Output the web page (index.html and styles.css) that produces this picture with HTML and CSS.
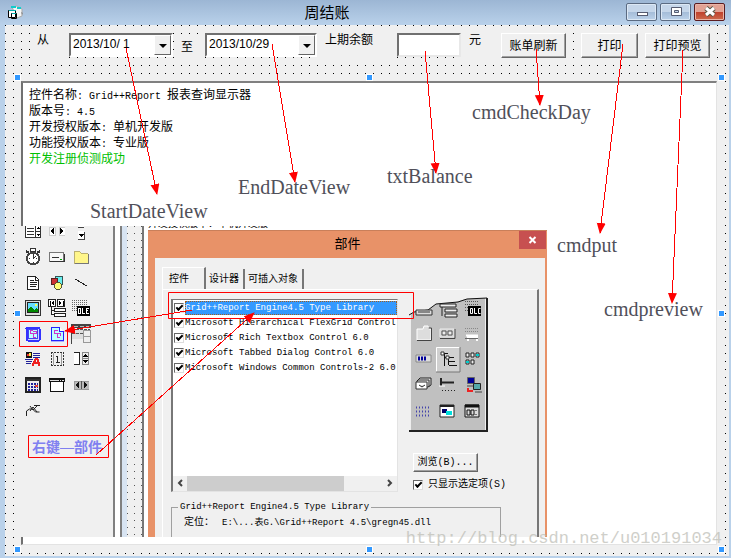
FILE: index.html
```html
<!DOCTYPE html>
<html lang="zh-CN">
<head>
<meta charset="utf-8">
<title>周结账</title>
<link rel="stylesheet" href="styles.css">
</head>
<body>
<div class="window">
  <header class="titlebar">
    <svg class="app-icon" width="16" height="16" viewBox="0 0 16 16" aria-hidden="true">
      <path d="M4 2l5-1 5 3v7l-5 2z" fill="#f4f4f4" stroke="#aaa"/><path d="M3 2h5M9 3h4" stroke="#1cc" stroke-width="2"/><path d="M13 7l2 1-1 2" fill="#888"/>
      <path d="M.5 5.500h7v7h-7zM3.500 8.500h5v5h-5z" fill="#fff" stroke="#000"/><path d="M1 5.500h7M4 8.500h4" stroke="#0aa" stroke-width="1"/>
    </svg>
    <h1>周结账</h1>
    <div class="window-buttons">
      <button type="button" aria-label="最小化"><svg width="14" height="12" viewBox="0 0 14 12"><rect x="2.500" y="6.500" width="10" height="3" fill="#fff" stroke="#555b70"/></svg></button>
      <button type="button" aria-label="最大化"><svg width="14" height="12" viewBox="0 0 14 12"><path d="M2.500 1.500h10v8h-10zM5.500 4.500h4v2h-4z" fill="#fff" fill-rule="evenodd" stroke="#555b70"/></svg></button>
      <button type="button" class="close" aria-label="关闭"><svg width="14" height="12" viewBox="0 0 14 12"><path d="M3 2l8 7M11 2l-8 7" stroke="#554" stroke-width="5"/><path d="M3 2l8 7M11 2l-8 7" stroke="#fff" stroke-width="3"/></svg></button>
    </div>
  </header>

  <main class="form">
    <form class="toolbar">
      <label class="from" for="start">从</label>
      <span class="date start"><select id="start"><option>2013/10/ 1</option></select><i></i></span>
      <label class="to" for="end">至</label>
      <span class="date end"><select id="end"><option>2013/10/29</option></select><i></i></span>
      <label class="balance" for="balance">上期余额</label>
      <input id="balance" type="text">
      <label class="unit" for="balance">元</label>
      <button type="button" class="refresh">账单刷新</button>
      <button type="button" class="print">打印</button>
      <button type="button" class="preview">打印预览</button>
    </form>

    <div class="viewer-frame">
      <section class="viewer">
        <div class="message">
          <p>控件名称<span class="mono">: Grid++Report </span>报表查询显示器</p>
          <p>版本号<span class="mono">: 4.5</span></p>
          <p>开发授权版本<span class="mono">: </span>单机开发版</p>
          <p>功能授权版本<span class="mono">: </span>专业版</p>
          <p class="ok">开发注册侦测成功</p>
        </div>
        <div class="capture">
          <div class="toolbox">
            <div class="tools">
              <svg viewBox="0 0 16 16"><path d="M.5 1.500h15v12H.500zM10.500 1v12M11 7.500h5" fill="#fff" stroke="#333"/><path d="M2 4.500h7M2 7.500h7M2 10.500h7" stroke="#333"/><path d="M12 5l1.500-2L15 5zM12 10l1.500 2 1.500-2z" fill="#000"/></svg>
              <svg viewBox="0 0 16 16"><path d="M.5 3.500h6v8h-6zM10.500 3.500h6v8h-6z" fill="#fff" stroke="#ccc"/><path d="M5 4v6L1 7zM11 4v6l4-3z" fill="#000"/></svg>
              <svg viewBox="0 0 16 16"><path d="M5 1h6v2H5zM5 7h6v8H5z" fill="#fff"/><path d="M5 3.500h6M11.500 8v7.500H5" stroke="#444" fill="none"/><path d="M6 10h5l-2.500 3z" fill="#000"/></svg>

              <svg class="big" viewBox="0 0 18 18"><path d="M6.500.500h5v3h-5z" fill="#fff" stroke="#333"/><circle cx="9" cy="10.500" r="6" fill="#fff" stroke="#444" stroke-width="2"/><path d="M9 6v5l3-3M5 10.500h1M12 10.500h1M9 14v1" stroke="#333" fill="none"/><path d="M2 3l3 2M16 3l-3 2" stroke="#333" stroke-width="2"/></svg>
              <svg viewBox="0 0 16 16"><rect x=".5" y="3.500" width="14" height="9" rx="1" fill="#f8f8f8" stroke="#777"/><path d="M3 8.500h7M1 12.500h14v-8" fill="none" stroke="#333"/><path d="M11 10h2" stroke="#0a0"/></svg>
              <svg viewBox="0 0 16 16"><path d="M1 4l1-2h4l2 2h6l1 1v9H1z" fill="#fff68a" stroke="#bbb070"/><path d="M2 14.500h13.500V5" fill="none" stroke="#777"/></svg>

              <svg viewBox="0 0 16 16"><path d="M2.500 1.500h8l3 3v10h-11z" fill="#fff" stroke="#222"/><path d="M10.500 1v4h3M5 5.500h4M5 7.500h7M5 9.500h7M5 11.500h6" fill="none" stroke="#222"/></svg>
              <svg viewBox="0 0 16 16"><rect x="6.500" y="1.500" width="7" height="8" fill="#6ee" stroke="#355"/><rect x="2.500" y="3.500" width="6" height="6" fill="#c33" stroke="#522"/><circle cx="9" cy="11" r="3.500" fill="#ff7" stroke="#553"/></svg>
              <svg viewBox="0 0 16 16"><path d="M2 4l12 7" stroke="#222"/></svg>

              <svg viewBox="0 0 16 16"><rect x=".5" y=".5" width="15" height="15" fill="#ddd" stroke="#333"/><rect x="2.500" y="2.500" width="11" height="10" fill="#6df" stroke="#222"/><path d="M3 12V9l3-3 3 4 2-2 2 2v2z" fill="#080"/><path d="M10 4h2v2h-2z" fill="#ff5"/></svg>
              <svg class="big" viewBox="0 0 18 18"><path d="M.5.500h7v7h-7zM9.500.500h7v7h-7zM6.500 9.500h11v3h-11zM6.500 14.500h11v3h-11zM3 8v7h3M3 11.500h3" fill="#fff" stroke="#222"/><path d="M2 2v5M15 2v5" stroke="#000"/><path d="M6 2v4L3 4zM11 2v4l3-2z" fill="#000"/></svg>
              <svg class="big" viewBox="0 0 18 18"><path d="M0 1.500h16M0 3.500h16M0 5.500h16M0 7.500h5M0 9.500h5M0 11.500h5" stroke="#666" stroke-dasharray="1 1"/><rect x="5" y="7" width="13" height="10" fill="#000"/><path d="M6.500 9.500h2v5h-2zM10.500 9v5.500H13M16.500 9.500h-2v5h2M14 11.500h2" fill="none" stroke="#fff"/></svg>

              <svg viewBox="0 0 16 16"><rect x="1.500" y="1.500" width="13" height="13" rx="1" fill="#cbd4ff" stroke="#33f" stroke-width="2"/><rect x="3.500" y="3.500" width="9" height="9" fill="#bff" stroke="#44e"/><path d="M8 4.500H5.500v3H8M8.500 8v3.500H11M7 7.500h4v-2H8" fill="none" stroke="#c3c"/></svg>
              <svg viewBox="0 0 16 16"><path d="M2.500 1.500h8l4 4v9h-12z" fill="#bff" stroke="#22f"/><path d="M10.500 1.500v4h4" fill="#fff" stroke="#22f"/><path d="M8.500 4.500H5.500v3H8M8.500 8v3.500H11M7 7.500h4v2" fill="none" stroke="#c3c"/><path d="M2 15.500h13" stroke="#aaf"/></svg>
              <svg class="large" viewBox="0 0 20 20"><path d="M0 0h20v4H0z" fill="#444"/><path d="M2 2h5M9 2h4M15 2h4" stroke="#bbb"/><path d="M1 5h11v10H1z" fill="#ddd"/><path d="M1 5.500h18M1 9.500h18" stroke="#555" stroke-dasharray="3 1"/><path d="M12.500 6.500h7v12h-7z" fill="#eee" stroke="#999"/><path d="M13 12.500h6" stroke="#999"/><path d="M.5 0v20" stroke="#444"/></svg>

              <svg viewBox="0 0 16 16"><path d="M1 1h6v6H1z" fill="#111"/><path d="M2 3h2v2H2z" fill="#e33"/><path d="M4 2h2v3H4z" fill="#fe4"/><path d="M8 2.500h7M8 4.500h7M8 6.500h7M0 8.500h8M1 10.500h6M1 12.500h5" stroke="#229"/><path d="M7.500 15l3-7h2l2 7M9 12h5" fill="none" stroke="#e22" stroke-width="2"/></svg>
              <svg viewBox="0 0 16 16"><path d="M2 1.500h13M2 14.500h13M2.500 1v14M14.500 1v14" stroke="#333" stroke-dasharray="2 1"/><path d="M4.500 2v12M12.500 2v12" stroke="#999"/><path d="M7 5.500h1.500v6M7 11.500h4" fill="none" stroke="#222"/></svg>
              <svg viewBox="0 0 16 16"><path d="M1 1.500h5.500v12H1" fill="#fff" stroke="#222"/><path d="M9.500 1.500h6v12h-6zM9 7.500h6" fill="#eee" stroke="#888"/><path d="M10 6l2.500-3L15 6zM10 9l2.500 3L15 9z" fill="#000"/></svg>

              <svg viewBox="0 0 16 16"><rect x="1" y="1" width="14" height="14" fill="#eee" stroke="#222" stroke-width="2"/><path d="M1 3h14" stroke="#333" stroke-width="2"/><path d="M3 6.500h10M3 9.500h10M3 12.500h10" stroke="#229" stroke-width="2" stroke-dasharray="2 1"/><path d="M10 8h3v2h-3z" fill="#e43"/></svg>
              <svg viewBox="0 0 16 16"><path d="M1.500 4.500h13v10h-13z" fill="#fff" stroke="#111"/><path d="M0 1h16v4H0z" fill="#111"/><path d="M1 3h9M11 3h1M13 3h2" stroke="#ddd"/></svg>
              <svg viewBox="0 0 16 16"><path d="M1 4h15v8H1z" fill="#bbb" stroke="#999"/><path d="M6 5v6L2 8zM11 5v6l4-3z" fill="#111"/><path d="M8.500 4v8" stroke="#555"/></svg>

              <svg viewBox="0 0 16 16"><path d="M1.500 14V9l3-2h3l3 3h4M5 4l3 4 5-5M9 3.500h6M5 9l3-4 4 5" fill="none" stroke="#222" shape-rendering="auto"/></svg>
            </div>
            <p class="hint">右键—部件</p>
          </div>
          <div class="splitter"></div>
          <div class="designer"></div>

          <div class="dialog-column">
            <p class="clipped">开发授权版本：单机开发版</p>
            <section class="dialog">
              <header class="dialog-title"><h2>部件</h2><button type="button" aria-label="关闭部件"><svg width="10" height="10" viewBox="0 0 10 10"><path d="M1.500 2l6 6M7.500 2l-6 6" stroke="#fff" stroke-width="2"/></svg></button></header>
              <div class="dialog-body">
                <nav class="tabs"><button type="button" class="active">控件</button><button type="button">设计器</button><button type="button">可插入对象</button></nav>
                <div class="page">
                  <div class="columns">
                    <div class="listbox">
                      <label class="selected"><input type="checkbox" checked><span>Grid++Report Engine4.5 Type Library</span></label>
                      <label><input type="checkbox" checked><span>Microsoft Hierarchical FlexGrid Control 6</span></label>
                      <label><input type="checkbox" checked><span>Microsoft Rich Textbox Control 6.0</span></label>
                      <label><input type="checkbox" checked><span>Microsoft Tabbed Dialog Control 6.0</span></label>
                      <label><input type="checkbox" checked><span>Microsoft Windows Common Controls-2 6.0</span></label>
                      <div class="scrollbar"><svg width="14" height="14" viewBox="0 0 14 14"><path d="M9 4L6 7l3 3" fill="none" stroke="#444" stroke-width="2"/></svg><i></i><svg width="14" height="14" viewBox="0 0 14 14"><path d="M5 4l3 3-3 3" fill="none" stroke="#444" stroke-width="2"/></svg></div>
                    </div>
                    <div class="side">
                      <svg class="palette" width="79" height="136" viewBox="0 0 79 136" aria-hidden="true">
                        <path d="M1 18l4-3 14-2 8-6 20-2 9-3 20-1v133H1z" fill="#c0c0c0"/>
                        <path d="M0 18l5-3 14-2 8-6 22-2 9-3 20-1" fill="none" stroke="#111"/>
                        <path d="M1.500 18v115" stroke="#eee"/><path d="M0 134h78V1" fill="none" stroke="#222" stroke-width="2"/>
                        <path d="M7 13h16v5H7zM9 15h12" fill="#ddd" stroke="#333"/>
                        <path d="M31 7h16v3H31zM36 12h12v3H36zM36 17h12v3H36zM33 10v9" fill="#eee" stroke="#222"/>
                        <path d="M56 4.500h14M56 7.500h14M56 10.500h4M56 13.500h4" stroke="#555" stroke-dasharray="1 1"/><path d="M59 9h13v10H59z" fill="#000"/><path d="M61.500 11.500h2v5h-2zM65.500 11v5.500H68M71.500 11.500h-2v5h2" fill="none" stroke="#fff"/>
                        <path d="M8 32h6l1-3h4l1 3h2v11H8z" fill="#ddd" stroke="#fff"/><path d="M8 43.500h14.500V31h-3" fill="none" stroke="#444"/>
                        <path d="M31 32h14v8H31z" fill="#ccc" stroke="#eee"/><path d="M33 34h4v4h-4zM39 34h4v4h-4z" fill="#eee" stroke="#555"/><path d="M31 41.500h15V32" fill="none" stroke="#444"/>
                        <path d="M56 31.500h14M56 34.500h14" stroke="#888" stroke-dasharray="1 1"/><path d="M57 38.500h12M59 44v-4h9v4" fill="none" stroke="#fff" stroke-width="2"/><path d="M56 41.500h13" stroke="#666"/>
                        <path d="M7 58h15v7H7z" fill="#ddd" stroke="#888"/><path d="M9 59.500h2v4H9zM12 59.500h2v4h-2zM15 59.500h2v4h-2z" fill="#009"/>
                        <path d="M27 50h24v25H27z" fill="#d0d0d0"/><path d="M27.500 75V50.500H51" fill="none" stroke="#fff"/><path d="M27 75h24V50" fill="none" stroke="#777"/>
                        <path d="M33 56.500h6M35.500 57v12M36 60.500h9M39.500 61v7M40 64.500h6M40 68.500h8" fill="none" stroke="#111"/><path d="M32 55h3v3h-3zM37 59h3v3h-3z" fill="#fff" stroke="#333"/>
                        <path d="M57 56h3v4h-3zM62 56h3v4h-3zM67 56h3v4h-3zM57 63h3v4h-3zM62 63h3v4h-3z" fill="#eee" stroke="#222"/><path d="M67 57h3v2h-3zM57 64h3v2h-3z" fill="#0cc"/>
                        <path d="M11 81h11v7l-3 2H8v-6z" fill="#ddd" stroke="#222"/><path d="M7 85h11v7H7zM10 88l3 2 3-2" fill="#fff" stroke="#333"/><path d="M9 83h11v7" fill="none" stroke="#333"/>
                        <path d="M32 81v8M33 85.500h12" stroke="#222" stroke-width="2"/><path d="M33 93.500h13" stroke="#222" stroke-dasharray="1 2"/><path d="M30 89h6" stroke="#fff"/>
                        <path d="M58.500 80.500h7v6h-7z" fill="#009" stroke="#666"/><path d="M64.500 86.500h7v6h-7z" fill="#5aa" stroke="#222"/><path d="M58 89h6M66 95h7" stroke="#444"/><path d="M59 91v3h5" fill="none" stroke="#e22" stroke-width="2"/>
                        <path d="M7 110.500h13M7 114.500h13M7 118.500h13" stroke="#44a" stroke-dasharray="1 2" stroke-width="2"/>
                        <path d="M31 108h14v12H31z" fill="#fff" stroke="#222"/><path d="M31 109h14" stroke="#222" stroke-width="2"/><path d="M33 112h5v4h-5z" fill="#006"/><path d="M37 114h6v4h-6z" fill="#0dd"/>
                        <path d="M56 108h14v12H56z" fill="#ddd" stroke="#111"/><path d="M56 109h14" stroke="#111" stroke-width="3"/><path d="M58 113h3v5h-3zM62 113h3v5h-3zM67 113v1M67 117v1" fill="none" stroke="#111"/>
                      </svg>
                      <button type="button" class="browse">浏览<span>(B)...</span></button>
                      <label class="only"><input type="checkbox" checked>只显示选定项<span>(S)</span></label>
                    </div>
                  </div>
                  <fieldset><legend>Grid++Report Engine4.5 Type Library</legend><p><span class="loc">定位：</span>E:\...<b>表</b>G.\Grid++Report 4.5\gregn45.dll</p></fieldset>
                </div>
              </div>
            </section>
          </div>
        </div>
      </section>
      <div class="handles" aria-hidden="true"><i></i><i></i><i></i><i></i><i class="none"></i><i></i><i></i><i></i><i></i></div>
    </div>
  </main>

  <svg class="arrows" width="731" height="558" viewBox="0 0 731 558" aria-hidden="true">
    <defs><marker id="head" markerUnits="userSpaceOnUse" markerWidth="12" markerHeight="10" refX="10" refY="4.500" orient="auto"><path d="M0 0l11 4.500-11 4.500z" fill="#f00"/></marker></defs>
    <g fill="none" stroke="#f00" marker-end="url(#head)" shape-rendering="crispEdges">
      <path d="M126 48L157 194"/><path d="M272 44L295 182"/><path d="M425 51L436 173"/><path d="M536 49L540 105"/><path d="M623 44L600 233"/><path d="M683 50L672 303"/><path d="M192 310L65 331"/><path d="M96 455L254 313"/>
    </g>
    <g fill="none" stroke="#f00"><path d="M168.500 292.500h245v26h-245zM19.500 321.500h48v25h-48zM28.500 435.500h80v22h-80z"/></g>
  </svg>
  <span class="note n1">StartDateView</span>
  <span class="note n2">EndDateView</span>
  <span class="note n3">txtBalance</span>
  <span class="note n4">cmdCheckDay</span>
  <span class="note n5">cmdput</span>
  <span class="note n6">cmdpreview</span>
  <span class="watermark">http://blog.csdn.net/u010191034</span>
</div>
</body>
</html>
```
FILE: styles.css
```css
*, *::after { box-sizing: border-box; }
body, h1, h2, p { margin: 0; font-weight: normal; }
body { font: 12px/16px "Liberation Sans", "Noto Sans CJK SC", sans-serif; color: #000; }
button, input, select { font: inherit; color: inherit; margin: 0; padding: 0; border-radius: 0; }
p, label, button { white-space: nowrap; }

.window { position: relative; display: flex; flex-direction: column; min-height: 100vh; padding: 0 2px 2px 5px; background: #b9d1ea; overflow: hidden; }
.titlebar { display: grid; grid-template-columns: 100px 1fr 100px; align-items: center; height: 25px; margin: 0 -2px 0 -5px; padding: 0 5px 0 8px; background: linear-gradient(#9cb6d4, #b9d1ea); }
.titlebar h1 { padding-right: 80px; font-size: 15px; line-height: 24px; text-align: center; }
.window-buttons { display: flex; gap: 3px; padding-bottom: 1px; }
.window-buttons button { display: grid; place-items: center; width: 31px; height: 18px; border: 1px solid #5b6b82; border-radius: 2px; background: linear-gradient(#c5d6ea 50%, #a4bcd8 50%, #bcd2ea); box-shadow: inset 0 0 0 1px #dce8f5; }
.window-buttons .close { border-color: #5a1c20; background: linear-gradient(#e2a294 50%, #c0402c 50%, #cc6a4c); box-shadow: inset 0 0 0 1px #e9b5a8; }

.form { flex: 1; display: flex; flex-direction: column; background: linear-gradient(transparent 1px, #f0f0f0 1px) 0 0 / 8px 8px, linear-gradient(90deg, #000 1px, #f0f0f0 1px) 0 0 / 8px 8px; }

.toolbar { display: flex; align-items: flex-start; height: 56px; padding: 8px 0 0 32px; }
.toolbar label { background: #f0f0f0; height: 28px; line-height: 14px; }
.toolbar .from { width: 32px; }
.toolbar .to { width: 24px; height: 24px; margin: 4px 0 0 8px; line-height: 20px; }
.toolbar .balance { width: 80px; padding-left: 8px; }
.toolbar .unit { width: 40px; padding-left: 8px; }
.date { position: relative; display: flex; align-items: center; height: 24px; border: 2px solid; border-color: #707070 #fff #fff #707070; background: #fff; }
.date.start { width: 104px; }
.date.end { width: 112px; }
.date select { width: 100%; height: 20px; padding: 0 0 2px 2px; border: 0; background: none; appearance: none; }
.date i { position: absolute; right: 0; top: 0; width: 17px; height: 20px; pointer-events: none; background: #f0f0f0; border: 1px solid; border-color: #fff #666 #666 #fff; }
.date i::after { content: ""; display: block; width: 8px; height: 4px; margin: 8px 0 0 4px; border: solid transparent; border-width: 4px 4px 0; border-top-color: #000; }
#balance { width: 64px; height: 24px; border: 2px solid; border-color: #707070 #e8e8e8 #e8e8e8 #707070; background: #fff; }
.toolbar button { height: 25px; border: 1px solid; border-color: #fff #666 #666 #fff; box-shadow: inset -1px -1px #a0a0a0; background: #f0f0f0; }
.toolbar .refresh { width: 65px; }
.toolbar .print { width: 57px; margin-left: 15px; }
.toolbar .preview { width: 65px; margin-left: 7px; }

.viewer-frame { position: relative; flex: 1; display: flex; margin: 0 7px 7px 16px; padding: 0 5px 4px 0; background: #f0f0f0; }
.viewer { flex: 1; min-width: 0; display: flex; flex-direction: column; border: 2px solid; border-color: #808080 #e3e3e3 #e3e3e3 #707070; border-right-width: 1px; border-bottom-width: 1px; background: #fff; }
.message { height: 143px; padding: 4px 6px; }
.mono { font-family: "Liberation Mono", monospace; font-size: 10px; line-height: 1; white-space: pre; }
.ok { color: #00c000; }
.handles { position: absolute; left: -7px; top: -7px; right: -3px; bottom: -4px; display: grid; grid-template-columns: repeat(3, 7px); grid-template-rows: repeat(3, 7px); justify-content: space-between; align-content: space-between; pointer-events: none; }
.handles i { background: #3399ff; border: 1px solid #fff; }
.handles .none { visibility: hidden; }

.capture { flex: 1; display: flex; margin: 0 0 7px -2px; overflow: hidden; }
.toolbox { width: 92px; background: #f0f0f0; }
.tools { display: grid; grid-template-columns: repeat(3, 24px); grid-template-rows: repeat(8, 1fr); place-items: center; height: 204px; margin-top: -7px; shape-rendering: crispEdges; }
.tools svg { width: 16px; height: 16px; }
.tools .big { width: 18px; height: 18px; }
.tools .large { width: 20px; height: 20px; }
.hint { margin: 14px 0 0 11px; font: bold 14px/22px "Liberation Serif", "Noto Sans CJK SC", serif; color: #8080f0; }
.splitter { width: 14px; background: linear-gradient(90deg, #808080 2px, #fff 2px 7px, #808080 7px 9px, #d8e4f2 9px); }
.designer { width: 21px; border-right: 4px solid #fff; box-shadow: inset -2px 0 #777; background: linear-gradient(transparent 1px, #f0f0f0 1px) 0 0 / 7px 7px, linear-gradient(90deg, #555 1px, #f0f0f0 1px) 0 0 / 7px 7px; }

.dialog-column { width: 399px; display: flex; flex-direction: column; }
.clipped { display: flex; align-items: flex-end; height: 4px; overflow: hidden; font-size: 10px; line-height: 12px; }
.dialog { flex: 1; display: flex; flex-direction: column; padding: 0 2px 0 7px; background: #e89268; }
.dialog-title { position: relative; display: flex; justify-content: center; height: 28px; margin: 0 -2px 0 -7px; box-shadow: inset 0 1px #c97f5a; }
.dialog-title h2 { font-size: 13px; line-height: 28px; }
.dialog-title button { position: absolute; right: 1px; top: 1px; display: grid; place-items: center; width: 27px; height: 18px; border: 0; background: #c75050; }
.dialog-body { flex: 1; display: flex; flex-direction: column; padding: 9px 6px 0 7px; background: #f0f0f0; }
.tabs { display: flex; align-items: flex-end; height: 22px; }
.tabs button { height: 20px; padding: 0 4px 0 3px; border: 0; border-right: 2px solid #777; background: #f0f0f0; font-size: 10px; }
.tabs .active { height: 22px; padding: 0 15px 0 6px; border-top: 1px solid #fff; border-left: 1px solid #fff; }
.page { flex: 1; display: flex; flex-direction: column; border: 1px solid; border-color: #fff #777 #777 #fff; border-width: 1px 2px 0 1px; padding: 9px 8px 0; font: 9px/14px "Liberation Mono", "Noto Sans CJK SC", monospace; }
.columns { display: flex; gap: 11px; height: 193px; }
.listbox { display: flex; flex-direction: column; width: 227px; border: 1px solid; border-color: #777 #e3e3e3 #e3e3e3 #777; border-left-width: 2px; background: #fff; overflow: hidden; }
.listbox label { display: flex; align-items: center; height: 15px; padding-left: 1px; gap: 1px; }
.listbox label span { flex: 1; min-width: 0; overflow: hidden; }
.listbox .selected span { background: #3399ff; color: #fff; outline: 1px dotted #a06020; outline-offset: -1px; }
.page input { appearance: none; flex: none; display: grid; place-items: center; width: 10px; height: 10px; border: 1px solid; border-color: #666 #ddd #ddd #666; background: #fff; }
.page input::after { content: ""; width: 7px; height: 4px; margin-bottom: 2px; border: solid #000; border-width: 0 0 2px 2px; transform: rotate(-45deg); }
.scrollbar { display: flex; height: 15px; margin-top: auto; background: #f0f0f0; }
.scrollbar i { width: 157px; margin-right: auto; background: #cdcdcd; }
.scrollbar svg { flex: none; }
.side { display: flex; flex-direction: column; align-items: flex-start; }
.palette { flex: none; margin-top: -2px; }
.browse { width: 65px; height: 20px; margin: 20px 0 6px 4px; border: 1px solid; border-color: #fff #666 #666 #fff; box-shadow: inset -1px -1px #a0a0a0; background: #f0f0f0; font-size: 10px; line-height: 16px; }
.only { display: flex; align-items: center; gap: 5px; margin-left: 4px; font-size: 10px; }
.only span { margin-left: -5px; }
fieldset { flex: 1; width: 330px; margin: 9px 0 0; padding: 3px 12px 0; border: 1px solid #a0a0a0; border-bottom: 0; }
legend { margin-left: -6px; padding: 0 2px; line-height: 12px; }
fieldset p { line-height: 13px; }
fieldset b { font-weight: normal; }
.loc { margin-right: 8px; font-size: 10px; }

.arrows { position: absolute; left: 0; top: 0; pointer-events: none; }
.note { position: absolute; font: 20px/24px "Liberation Serif", serif; color: #50505a; }
.n1 { left: 90px; top: 199px; }
.n2 { left: 238px; top: 175px; }
.n3 { left: 387px; top: 164px; }
.n4 { left: 472px; top: 100px; }
.n5 { left: 557px; top: 233px; }
.n6 { left: 604px; top: 297px; }
.watermark { position: absolute; right: 9px; bottom: 7px; font: 17px/24px "Liberation Mono", monospace; color: #bcbcb4; opacity: .7; }
```
